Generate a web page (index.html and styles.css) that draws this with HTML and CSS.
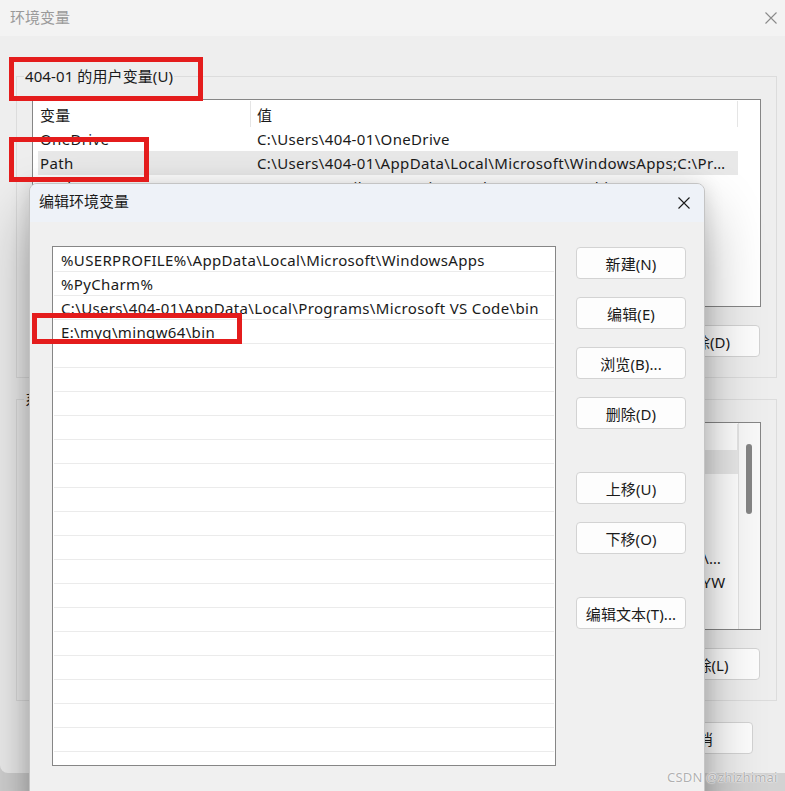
FILE: index.html
```html
<!DOCTYPE html>
<html lang="zh-CN">
<head>
<meta charset="utf-8">
<title>环境变量</title>
<link rel="stylesheet" href="styles.css">
</head>
<body>
<div class="desk">
  <div class="win">
    <div class="win-title">
      <span class="ttl">环境变量</span>
      <svg class="x-icon" width="12" height="12" viewBox="0 0 12 12"><path d="M0.5 0.5L11.5 11.5M11.5 0.5L0.5 11.5" stroke="#8a8a8a" stroke-width="1.1" fill="none"/></svg>
    </div>
    <div class="win-body">
      <fieldset class="grp">
        <legend>404-01 的用户变量(U)</legend>
        <div class="vlist">
          <div class="vmain">
            <div class="vhead"><div class="hc hc1">变量</div><div class="hc hc2">值</div></div>
            <div class="vrow"><div class="vn">OneDrive</div><div class="vv">C:\Users\404-01\OneDrive</div></div>
            <div class="vrow sel"><div class="vn">Path</div><div class="vv">C:\Users\404-01\AppData\Local\Microsoft\WindowsApps;C:\Program Files\JetBrains\PyCharm 2024.3.4\bin;C:\Users\404-01\AppData\Local\Programs\Microsoft VS Code\bin</div></div>
            <div class="vrow"><div class="vn">PyCharm</div><div class="vv">C:\Program Files\JetBrains\PyCharm 2024.3.4\bin;</div></div>
            <div class="vrow"><div class="vn">TEMP</div><div class="vv">C:\Users\404-01\AppData\Local\Temp</div></div>
            <div class="vrow"><div class="vn">TMP</div><div class="vv">C:\Users\404-01\AppData\Local\Temp</div></div>
          </div>
          <div class="vside"></div>
        </div>
        <div class="gbtns">
          <div class="btn">新建(N)...</div>
          <div class="btn">编辑(E)...</div>
          <div class="btn">删除(D)</div>
        </div>
      </fieldset>
      <fieldset class="grp grp2">
        <legend>系统变量(S)</legend>
        <div class="vlist">
          <div class="vmain">
            <div class="vhead"><div class="hc hc1">变量</div><div class="hc hc2">值</div></div>
            <div class="vrow sel"><div class="vn">ComSpec</div><div class="vv">C:\WINDOWS\system32\cmd.exe</div></div>
            <div class="vrow"><div class="vn">DriverData</div><div class="vv">C:\Windows\System32\Drivers\DriverData</div></div>
            <div class="vrow"><div class="vn">NUMBER_OF_PROCESSORS</div><div class="vv">16</div></div>
            <div class="vrow"><div class="vn">OS</div><div class="vv">Windows_NT</div></div>
            <div class="vrow"><div class="vn">Path</div><div class="vv">C:\Program Files\Common Files\Oracle\Java\javapath;C:\ADB\Windows\system32;C:\WINDOWS;C:\WINDOWS\System32\Wbem;C:\WINDOWS\System32\WindowsPowerShell\v1.0\;C:\WINDOWS\System32\OpenSSH\;C:\Program Files\dotnet\</div></div>
            <div class="vrow"><div class="vn">PATHEXT</div><div class="vv">.COM;.EXE;.BAT;.CMD;.VBS;.VBE;.JS;.JSE;.WSF;.WSH;.MSC;.PY;.PYW</div></div>
            <div class="vrow"><div class="vn">PROCESSOR_ARCHITECTURE</div><div class="vv">AMD64</div></div>
            <div class="vrow"><div class="vn">PROCESSOR_IDENTIFIER</div><div class="vv">Intel64 Family 6 Model 154 Stepping 3, GenuineIntel</div></div>
          </div>
          <div class="vside vscroll"><div class="thumb"></div></div>
        </div>
        <div class="gbtns">
          <div class="btn">新建(W)...</div>
          <div class="btn">编辑(I)...</div>
          <div class="btn">删除(L)</div>
        </div>
      </fieldset>
      <div class="foot">
        <div class="btn primary">确定</div>
        <div class="btn">取消</div>
      </div>
    </div>
  </div>

  <div class="dlg">
    <div class="dlg-title">
      <span class="ttl">编辑环境变量</span>
      <svg class="x-icon" width="12" height="12" viewBox="0 0 12 12"><path d="M0.5 0.5L11.5 11.5M11.5 0.5L0.5 11.5" stroke="#1a1a1a" stroke-width="1.1" fill="none"/></svg>
    </div>
    <div class="dlg-body">
      <div class="plist">
        <div class="prow">%USERPROFILE%\AppData\Local\Microsoft\WindowsApps</div>
        <div class="prow">%PyCharm%</div>
        <div class="prow">C:\Users\404-01\AppData\Local\Programs\Microsoft VS Code\bin</div>
        <div class="prow">E:\myq\mingw64\bin</div>
        <div class="prow"></div><div class="prow"></div><div class="prow"></div><div class="prow"></div>
        <div class="prow"></div><div class="prow"></div><div class="prow"></div><div class="prow"></div>
        <div class="prow"></div><div class="prow"></div><div class="prow"></div><div class="prow"></div>
        <div class="prow"></div><div class="prow"></div><div class="prow"></div><div class="prow"></div>
        <div class="prow"></div>
      </div>
      <div class="pbtns">
        <div class="btn">新建(N)</div>
        <div class="btn">编辑(E)</div>
        <div class="btn">浏览(B)...</div>
        <div class="btn">删除(D)</div>
        <div class="spacer"></div>
        <div class="btn">上移(U)</div>
        <div class="btn">下移(O)</div>
        <div class="spacer"></div>
        <div class="btn">编辑文本(T)...</div>
      </div>
    </div>
  </div>

  <div class="mark mark1"></div>
  <div class="mark mark2"></div>
  <div class="mark mark3"></div>
  <div class="watermark">CSDN @zhizhimai</div>
</div>
</body>
</html>
```
FILE: styles.css
```css
* { box-sizing: border-box; }
html, body { margin: 0; padding: 0; }
body {
  width: 785px;
  height: 791px;
  overflow: hidden;
  background: #d2d2d2;
  font-family: "Noto Sans", "Noto Sans CJK SC", sans-serif;
  font-size: 15px;
  letter-spacing: 0.35px;
  color: #1a1a1a;
}
.desk { position: relative; width: 785px; height: 791px; overflow: hidden; }
.ttl { letter-spacing: 0; }

/* background window */
.win {
  width: 785px;
  height: 773px;
  background: #eeeeee;
  border-bottom-left-radius: 8px;
  overflow: hidden;
}
.win-title {
  height: 36px;
  background: #f3f3f3;
  color: #9a9a9a;
  display: flex;
  align-items: center;
  justify-content: space-between;
  padding: 0 8px 4px 10px;
}
.win-title .x-icon { margin-top: 4px; }
.win-body { padding: 30px 8px 0 16px; }
.grp {
  margin: 0;
  min-width: 0;
  border: 1px solid #dcdcdc;
  padding: 13px 15px 20px 15px;
}
.grp legend {
  margin-left: -8px;
  padding: 0 1px;
  line-height: 20px;
  letter-spacing: 0.1px;
}
.grp2 { margin-top: 11px; }
.vlist {
  height: 208px;
  background: #fff;
  border: 1px solid #868686;
  display: flex;
  overflow: hidden;
}
.vmain { width: 705px; }
.vside { flex: 1; }
.vscroll {
  background: #f9f9f9;
  border-left: 1px solid #e3e3e3;
  padding: 21px 0 0 7px;
}
.thumb { width: 6px; height: 70px; background: #858585; border-radius: 3px; }
.vhead { display: flex; height: 27px; }
.hc {
  height: 26px;
  margin-top: 1px;
  padding: 2px 0 0 7px;
  line-height: 24px;
  border-right: 1px solid #e5e5e5;
}
.hc1 { width: 218px; }
.hc2 { width: 487px; padding-left: 6px; }
.vrow {
  display: flex;
  height: 24px;
  line-height: 24px;
  margin-left: 5px;
  width: 700px;
  white-space: nowrap;
}
.vrow.sel { background: #e8e8e8; }
.vn { width: 213px; padding-left: 2px; overflow: hidden; }
.vv {
  width: 487px;
  padding: 0 8px 0 6px;
  overflow: hidden;
  text-overflow: ellipsis;
}
.gbtns {
  display: flex;
  justify-content: flex-end;
  gap: 10px;
  margin-top: 18px;
  padding-right: 1px;
}
.foot {
  display: flex;
  justify-content: flex-end;
  gap: 10px;
  margin-top: 21px;
  padding-right: 24px;
}

.btn {
  width: 110px;
  height: 32px;
  background: #fdfdfd;
  border: 1px solid #d3d3d3;
  border-radius: 4px;
  display: flex;
  align-items: center;
  justify-content: center;
  color: #1a1a1a;
  white-space: nowrap;
  letter-spacing: 0.1px;
}

/* foreground dialog */
.dlg {
  position: absolute;
  left: 29px;
  top: 183px;
  width: 676px;
  height: 640px;
  background: #f0f0f0;
  border: 1px solid #c4c4c4;
  border-radius: 8px 8px 0 0;
  box-shadow: 0 30px 60px rgba(0, 0, 0, 0.32), 0 2px 20px rgba(0, 0, 0, 0.14);
  overflow: hidden;
}
.dlg-title {
  height: 38px;
  background: #eef2f8;
  display: flex;
  align-items: center;
  justify-content: space-between;
  padding: 0 14px 6px 9px;
}
.dlg-title .x-icon { margin-top: 5px; }
.dlg-body {
  display: flex;
  gap: 20px;
  padding: 24px 0 0 22px;
}
.plist {
  width: 504px;
  height: 520px;
  background: #fff;
  border: 1px solid #868686;
  padding-top: 1px;
}
.prow {
  height: 24px;
  margin: 0 1px;
  border-bottom: 1px solid #ebebeb;
  padding-left: 7px;
  line-height: 25px;
  white-space: nowrap;
}
.pbtns {
  display: flex;
  flex-direction: column;
  gap: 18px;
  padding-top: 1px;
}
.spacer { height: 7px; }

/* annotations */
.mark {
  position: absolute;
  border: 5px solid #e41c1c;
}
.mark1 { left: 9px; top: 57px; width: 194px; height: 44px; }
.mark2 { left: 9px; top: 137px; width: 140px; height: 45px; }
.mark3 { left: 32px; top: 313px; width: 210px; height: 31px; }

.watermark {
  position: absolute;
  left: 667px;
  top: 768px;
  font-size: 13px;
  letter-spacing: 0.2px;
  color: rgba(150, 150, 150, 0.75);
  text-shadow: 0 0 2px #fff, 0 0 1px #fff;
  white-space: nowrap;
}
```
